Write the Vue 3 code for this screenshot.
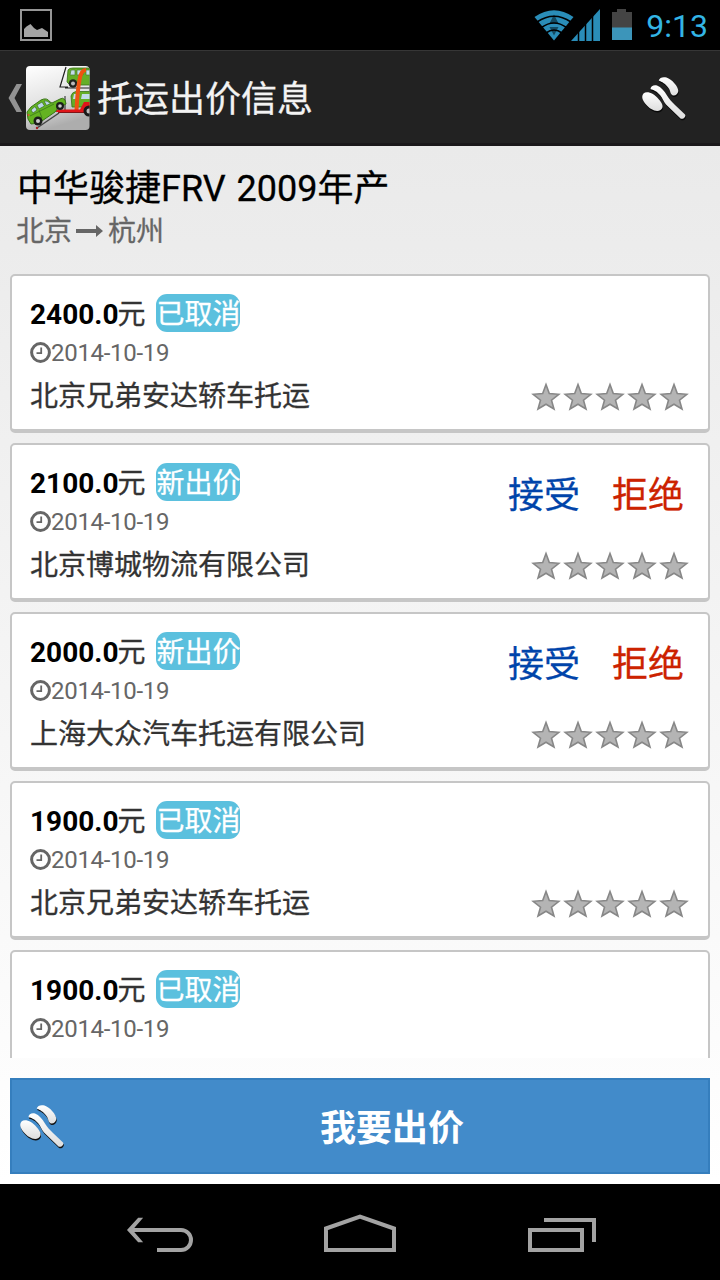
<template>
  <div class="screen">
    <div class="status-bar">
      <svg class="picture-icon" width="32" height="32" viewBox="0 0 32 32">
        <rect x="1" y="1" width="30" height="30" fill="none" stroke="#969696" stroke-width="2" />
        <path d="M4 28V20L6.500 17.500L10.500 15L14 19L17 21L22 19L28 23V28Z" fill="#a5a5a5" />
      </svg>
      <div class="status-right">
        <svg width="98" height="32" viewBox="0 0 98 32">
          <path d="M0.500 8Q20 -5.500 39.500 8L20 31.500Z" fill="#2a8db8" />
          <path d="M20 5.500L24.500 14.500H15.500ZM20 26.500L15.500 18H24.500Z" fill="#134a61" />
          <path d="M3 13Q20 1.500 37 13M7.500 18.500Q20 9.500 32.500 18.500M12 24Q20 18 28 24" fill="none" stroke="#000" stroke-width="1.600" />
          <path d="M37 32L66 0V32Z" fill="#2a8db8" />
          <path d="M44.500 22V32M51.500 14V32M58.500 6V32" stroke="#000" stroke-width="1.500" />
          <path d="M78 3H83V0H92V3H98V19H78Z" fill="#444" />
          <rect x="78" y="18.500" width="20" height="12.500" fill="#3c95ba" />
        </svg>
        <span class="time">9:13</span>
      </div>
    </div>

    <div class="action-bar">
      <svg class="up-icon" width="14" height="28" viewBox="0 0 14 28">
        <path d="M8.500 0H14L6.500 14L14 28H8.500L0.500 14Z" fill="#929292" />
      </svg>
      <svg class="app-icon" width="64" height="64" viewBox="0 0 64 64">
        <defs>
          <linearGradient id="tile" x1="0" y1="0" x2="0.300" y2="1">
            <stop offset="0" stop-color="#fff" />
            <stop offset="0.600" stop-color="#e2e2e2" />
            <stop offset="1" stop-color="#adadad" />
          </linearGradient>
          <clipPath id="tile-clip"><rect width="63.500" height="64" rx="4" /></clipPath>
        </defs>
        <g clip-path="url(#tile-clip)">
          <rect width="64" height="64" fill="url(#tile)" />
          <path d="M40 1L34 21H42M39 22H64" fill="none" stroke="#222" stroke-width="1.200" />
          <!-- upper car -->
          <path d="M42 4Q43 2 47 2H64V19H44L41 16Z" fill="#65ae26" stroke="#39711a" stroke-width="0.800" />
          <path d="M45 4H49V9H44ZM51 4H57V9H51ZM60 4H64V9H60Z" fill="#c3dbea" stroke="#497c32" stroke-width="0.700" />
          <circle cx="47" cy="17.500" r="4.300" fill="#20231e" /><circle cx="47" cy="17.500" r="2" fill="#bbb" />
          <!-- lower car -->
          <path d="M45 30Q46 26 50 25.500H64V41H46Z" fill="#65ae26" stroke="#39711a" stroke-width="0.800" />
          <path d="M48 28H52V33H47ZM56 28H64V33H55Z" fill="#c3dbea" />
          <path d="M39 30V44" stroke="#222" />
          <!-- trailer frame -->
          <path d="M50.500 44Q51.500 24 53.500 14Q55 4 60 4" fill="none" stroke="#ee5312" stroke-width="4" />
          <path d="M30 43.500H54L58 36H64V46H30Z" fill="#df1519" />
          <path d="M32 46.500H58" stroke="#801417" />
          <circle cx="63" cy="45" r="5.500" fill="#191919" /><circle cx="63" cy="45" r="2.500" fill="#bbb" />
          <path d="M11 62L33 47" stroke="#444" stroke-width="1.500" />
          <circle cx="11" cy="62" r="1.200" fill="#a22" />
          <!-- car on the ramp -->
          <path d="M1 46L5 41L15 34Q21 31 24 36L26 37L34 33Q37 31 39 34L40 38L32 42L29 46L13 57L5 58L2 53Z" fill="#64b321" stroke="#397519" stroke-width="1" />
          <path d="M5 44L9 40.500L11 44L7 47ZM11 39L16 36L18.500 40L13 43ZM18 35Q21 34 24.500 37.500L20.500 39.500Z" fill="#bcd5e9" stroke="#36711b" stroke-width="0.700" />
          <path d="M4 50L28 38M13 44L16 52" stroke="#347019" stroke-width="0.700" />
          <circle cx="12" cy="55" r="4.500" fill="#1b1d1b" /><circle cx="12" cy="55" r="2" fill="#ccc" />
          <circle cx="34" cy="40" r="4" fill="#1b1d1b" /><circle cx="34" cy="40" r="1.800" fill="#ccc" />
          <circle cx="2.500" cy="49" r="1" fill="#df4933" />
        </g>
      </svg>
      <h1>托运出价信息</h1>
      <svg class="gavel" width="48" height="48" viewBox="0 0 48 48">
        <use href="#gavel-shape" transform="translate(0.500 1.500)" fill="#080808" />
        <use href="#gavel-shape" fill="url(#gavel-fill)" />
      </svg>
    </div>

    <div class="content">
      <div class="car-info">
        <h2>中华骏捷FRV 2009年产</h2>
        <div class="route">
          <span>北京</span>
          <svg width="27" height="16" viewBox="0 0 27 16">
            <path d="M0 6H20V2L27 8L20 14V10H0Z" fill="#666" />
          </svg>
          <span>杭州</span>
        </div>
      </div>

      <div class="bids">
        <div v-for="bid in bids" :key="bid.id" class="bid">
          <div class="bid-main">
            <div class="price">
              <b>{{ bid.price }}</b><span class="unit">元</span>
              <span class="tag">{{ bid.status }}</span>
            </div>
            <div class="date">
              <svg width="21" height="21" viewBox="0 0 21 21">
                <circle cx="10.500" cy="10.500" r="8.900" fill="none" stroke="#666" stroke-width="3" />
                <path d="M11.200 5.500V11.200H6.500" fill="none" stroke="#666" stroke-width="1.800" />
              </svg>
              <span>{{ bid.date }}</span>
            </div>
            <div v-if="bid.company" class="company">{{ bid.company }}</div>
          </div>
          <div v-if="bid.company" class="bid-side">
            <div class="actions">
              <template v-if="bid.status === '新出价'">
                <span class="accept">接受</span>
                <span class="reject">拒绝</span>
              </template>
            </div>
            <div class="stars">
              <svg v-for="n in 5" :key="n" width="32" height="32" viewBox="0 0 32 32">
                <path d="M16 3.500L19.300 12.600L28.800 13.300L21.500 19.200L24 28L16 23.300L8 28L10.500 19.200L3.200 13.300L12.700 12.600Z" fill="#b4b4b4" stroke="#878787" stroke-width="1.600" />
              </svg>
            </div>
          </div>
        </div>
      </div>

      <div class="footer">
        <button class="bid-button">
          <svg class="gavel" width="48" height="48" viewBox="0 0 48 48">
            <use href="#gavel-shape" transform="translate(0.500 1.500)" fill="#111" />
            <use href="#gavel-shape" fill="url(#gavel-fill)" />
          </svg>
          <span>我要出价</span>
        </button>
      </div>
    </div>

    <div class="nav-bar">
      <svg width="80" height="40" viewBox="0 0 80 40" fill="none" stroke="#a3a3a3" stroke-width="4">
        <path d="M12 18H61A10 10 0 0 1 61 38H37" />
        <path d="M8 18L18.500 6.500H21.500L11.500 18L21.500 29.500H18.500Z" stroke-width="1.500" fill="#a3a3a3" />
      </svg>
      <svg width="80" height="40" viewBox="0 0 80 40" fill="none" stroke="#a3a3a3" stroke-width="4">
        <path d="M6 16.500L40 4.500L74 16.500V38H6Z" />
      </svg>
      <svg width="80" height="40" viewBox="0 0 80 40" fill="none" stroke="#a3a3a3" stroke-width="4">
        <rect x="10" y="18" width="52" height="20" />
        <path d="M24 8H74V30" />
      </svg>
    </div>

    <!-- shared gavel shape -->
    <svg class="defs" width="0" height="0">
      <defs>
        <linearGradient id="gavel-fill" x1="0" y1="0" x2="0" y2="1">
          <stop offset="0" stop-color="#fff" />
          <stop offset="1" stop-color="#dedede" />
        </linearGradient>
        <g id="gavel-shape">
          <path d="M3.500 19.500C7 16.500 14 19.500 18.500 25C23 30 24 33.500 20.500 36C16.500 38.500 10 35.500 6 30.500C2.500 26.500 1 22.500 3.500 19.500Z" />
          <path d="M10.500 15C10.500 12 14 10.500 17 11.500C21 13 24.500 17 27 21.500C29 25 32 28 35 31L45 40.500C46.500 42.500 43 46 40.500 44.500L26 30.500C23.500 27.500 22.500 24 20 21C16.500 17 13.500 16 10.500 15Z" />
          <path d="M18.700 6.500C19.500 3.500 23 2.500 26.500 3.500C32 5.500 38 12 38.300 17C38 19.500 36 21.500 33.500 21.500C30 21 31 17.500 28.500 14C25.500 9.500 22 8 18.700 6.500Z" />
        </g>
      </defs>
    </svg>
  </div>
</template>

<script setup>
import { ref } from "vue";

const bids = ref([
  { id: 1, price: "2400.0", status: "已取消", date: "2014-10-19", company: "北京兄弟安达轿车托运" },
  { id: 2, price: "2100.0", status: "新出价", date: "2014-10-19", company: "北京博城物流有限公司" },
  { id: 3, price: "2000.0", status: "新出价", date: "2014-10-19", company: "上海大众汽车托运有限公司" },
  { id: 4, price: "1900.0", status: "已取消", date: "2014-10-19", company: "北京兄弟安达轿车托运" },
  { id: 5, price: "1900.0", status: "已取消", date: "2014-10-19" },
]);
</script>

<style>
body {
  margin: 0;
}
</style>

<style scoped>
.screen {
  display: flex;
  flex-direction: column;
  width: 720px;
  height: 1280px;
  overflow: hidden;
  background: #000;
  font-family: Roboto, "Noto Sans CJK SC", sans-serif;
}

.screen svg {
  display: block;
  flex-shrink: 0;
}

.status-bar {
  display: flex;
  justify-content: space-between;
  align-items: center;
  box-sizing: border-box;
  height: 50px;
  padding: 0 12px 0 20px;
}

.status-right {
  display: flex;
  align-items: center;
  gap: 14px;
}

.time {
  color: #33b5e5;
  font-size: 32px;
  line-height: 50px;
  padding-top: 2px;
}

.action-bar {
  display: flex;
  align-items: center;
  box-sizing: border-box;
  height: 96px;
  padding: 2px 32px 0 8px;
  background: #222;
  border-top: 1px solid #363636;
  border-bottom: 3px solid #1a181a;
}

.app-icon {
  margin-left: 4px;
}

h1 {
  flex: 1;
  margin: 0 0 0 7px;
  padding-top: 4px;
  color: #f3f3f3;
  font-size: 36px;
  font-weight: 400;
  line-height: 86px;
  -webkit-text-stroke: 0.3px;
}

.content {
  display: flex;
  flex-direction: column;
  height: 1038px;
  background: linear-gradient(#eaeaea, #fff);
}

.car-info {
  box-sizing: border-box;
  height: 128px;
  padding: 20px 17px 0;
}

h2 {
  margin: 0;
  color: #000;
  font-size: 36px;
  font-weight: 400;
  line-height: 46px;
  word-spacing: 2px;
  -webkit-text-stroke: 0.3px;
}

.route {
  display: flex;
  align-items: center;
  color: #666;
  font-size: 28px;
  line-height: 40px;
  -webkit-text-stroke: 0.3px;
}

.route span:first-child {
  margin-left: -1px;
}

.route svg {
  margin: 0 5px 3px 4px;
}

.bids {
  display: flex;
  flex-direction: column;
  gap: 10px;
  height: 784px;
  padding: 0 10px;
  overflow: hidden;
}

.bid {
  display: flex;
  justify-content: space-between;
  flex-shrink: 0;
  box-sizing: border-box;
  height: 159px;
  padding: 18px 18px 0;
  background: #fff;
  border: 2px solid #c6c6c6;
  border-bottom-width: 4px;
  border-radius: 5px;
}

.price {
  display: flex;
  align-items: center;
  height: 38px;
  font-size: 28px;
  line-height: 34px;
}

.price b {
  padding-top: 4px;
  color: #000;
}

.unit {
  padding-top: 4px;
  margin-left: -1px;
  color: #333;
  -webkit-text-stroke: 0.3px;
}

.tag {
  margin-left: 11px;
  padding-top: 4px;
  color: #fff;
  background: #5bc0de;
  border-radius: 11px;
  -webkit-text-stroke: 0.3px;
}

.date {
  display: flex;
  align-items: center;
  height: 42px;
  color: #666;
  font-size: 24px;
  letter-spacing: -0.3px;
}

.date svg {
  margin-bottom: 2px;
}

.company {
  padding-top: 2px;
  color: #333;
  font-size: 28px;
  line-height: 42px;
  -webkit-text-stroke: 0.3px;
}

.bid-side {
  display: flex;
  flex-direction: column;
  align-items: flex-end;
}

.actions {
  display: flex;
  gap: 32px;
  height: 87px;
  padding-right: 6px;
  font-size: 36px;
  line-height: 66px;
  -webkit-text-stroke: 0.3px;
}

.accept {
  color: #04a;
}

.reject {
  color: #c20;
}

.stars {
  display: flex;
}

.footer {
  padding: 20px 10px 10px;
}

.bid-button {
  display: flex;
  align-items: center;
  box-sizing: border-box;
  width: 100%;
  height: 96px;
  padding: 0 6px;
  color: #fff;
  background: #428bca;
  border: 2px solid #357ebd;
  font-family: inherit;
  font-size: 36px;
  font-weight: 700;
}

.bid-button span {
  flex: 1;
  padding: 0 0 2px 16px;
  text-align: center;
}

.nav-bar {
  display: flex;
  justify-content: center;
  gap: 120px;
  box-sizing: border-box;
  height: 96px;
  padding-top: 28px;
}
</style>
